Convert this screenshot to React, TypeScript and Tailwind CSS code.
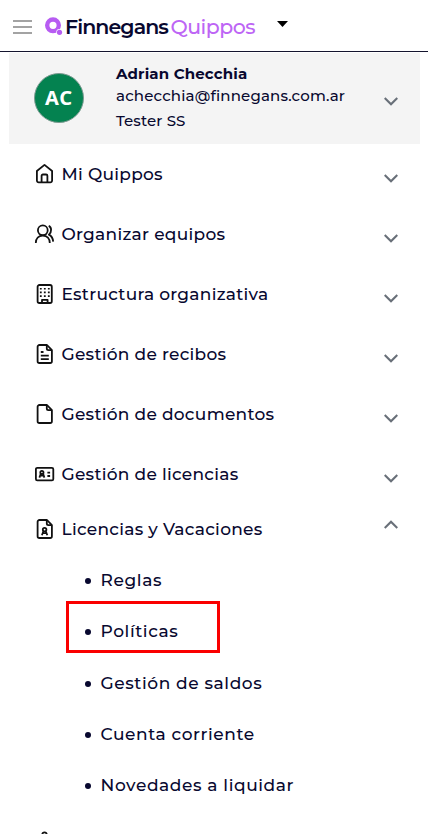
import type { ReactNode } from "react";
import { clsx } from "clsx";

const icons: Record<string, ReactNode> = {
    home: (
        <>
            <path d="M2.9 8 10.5 1.9 18.1 8v9.6a1.8 1.8 0 0 1-1.8 1.8H4.7a1.8 1.8 0 0 1-1.8-1.8Z" />
            <path d="M7.6 19v-6.2a1.3 1.3 0 0 1 1.3-1.3h3.2a1.3 1.3 0 0 1 1.3 1.3V19" />
        </>
    ),
    users: (
        <>
            <circle cx="8.8" cy="7.3" r="4.9" />
            <path d="M1.8 20c0-4.6 2.8-7.4 7-7.4s7 2.8 7 7.4M14.7 2.8c3 1.2 3.3 6.3.2 8.8 2.5 1.3 4 3.4 4.3 7" />
        </>
    ),
    building: (
        <>
            <rect x="3.6" y="2" width="14.2" height="18" rx="1.8" />
            <path d="M8 20v-3.2h5.6V20" />
            <path
                strokeDasharray="1.8 2.2"
                strokeWidth="1.6"
                d="M5.9 5.7h9.8M5.9 9.4h9.8M5.9 13.1h9.8"
            />
        </>
    ),
    receipt: (
        <>
            <path d="M5.4 2H13l4.9 5.2v11a1.8 1.8 0 0 1-1.8 1.8H5.4a1.8 1.8 0 0 1-1.8-1.8V3.8A1.8 1.8 0 0 1 5.4 2Z" />
            <path d="M12.8 2.2v3.4a1.6 1.6 0 0 0 1.6 1.6h3.2M6.8 9h2.7M6.8 12.6h8M6.8 16.2h8" />
        </>
    ),
    file: (
        <>
            <path d="M5.4 2H13l4.9 5.2v11a1.8 1.8 0 0 1-1.8 1.8H5.4a1.8 1.8 0 0 1-1.8-1.8V3.8A1.8 1.8 0 0 1 5.4 2Z" />
            <path d="M12.8 2.2v3.4a1.6 1.6 0 0 0 1.6 1.6h3.2" />
        </>
    ),
    card: (
        <>
            <rect x="1.9" y="4.8" width="17.4" height="12.6" rx="1.4" />
            <path d="M5.4 14.6 6.7 11M10.4 14.6 9.2 11M6.3 12.7h3.3M13.4 9.6h2.7M13.4 13h2.7" />
            <circle cx="7.9" cy="9.4" r="1.6" />
        </>
    ),
    profile: (
        <>
            <path d="M5.4 2H13l4.9 5.2v11a1.8 1.8 0 0 1-1.8 1.8H5.4a1.8 1.8 0 0 1-1.8-1.8V3.8A1.8 1.8 0 0 1 5.4 2Z" />
            <path d="M12.8 2.2v3.4a1.6 1.6 0 0 0 1.6 1.6h3.2M7.9 17.3l1.5-4M13.3 17.3l-1.5-4M8.7 15.2h3.8" />
            <circle cx="10.6" cy="11.6" r="1.8" />
        </>
    ),
};

const menu = [
    { icon: "home", label: "Mi Quippos" },
    { icon: "users", label: "Organizar equipos" },
    { icon: "building", label: "Estructura organizativa" },
    { icon: "receipt", label: "Gestión de recibos" },
    { icon: "file", label: "Gestión de documentos" },
    { icon: "card", label: "Gestión de licencias" },
];

const submenu = [
    { label: "Reglas" },
    { label: "Políticas", marked: true },
    { label: "Gestión de saldos" },
    { label: "Cuenta corriente" },
    { label: "Novedades a liquidar" },
];

export default function App() {
    return (
        <div className="flex h-[834px] w-[428px] flex-col overflow-hidden bg-white font-[Montserrat,Inter,sans-serif] font-medium text-[#08082f]">
            <Header />
            <UserCard />
            <nav className="flex flex-col">
                {menu.map((item) => (
                    <MenuRow key={item.label} {...item} className="h-[60px]" />
                ))}
                <MenuRow icon="profile" label="Licencias y Vacaciones" className="h-[50px]" open />
                <ul className="flex flex-col pt-[0.4px]">
                    {submenu.map((item) => (
                        <li
                            key={item.label}
                            className="relative flex h-[51.3px] items-center pl-[85px]"
                        >
                            {item.marked && (
                                <span className="absolute top-[-5px] left-[66px] h-[52px] w-[154px] border-3 border-[#fa0000]" />
                            )}
                            <span className="mt-[2px] mr-[9.5px] size-[6px] rounded-full bg-[#08082f]" />
                            <span className="text-[17px] leading-6 tracking-[0.6px] whitespace-nowrap">
                                {item.label}
                            </span>
                        </li>
                    ))}
                </ul>
                <div className="mt-[20px] h-6 pl-[34px]">
                    <svg className="size-[22px]" viewBox="0 0 22 22" fill="none" stroke="#111" strokeWidth="1.8">
                        <circle cx="10.5" cy="3.5" r="2.2" />
                        <path d="M10.5 6v5M4 17v-6h13v6" />
                    </svg>
                </div>
            </nav>
        </div>
    );
}

function Header() {
    return (
        <header className="flex h-[52px] shrink-0 border-b border-[#14142e] pl-[13px]">
            <div className="flex w-[19px] flex-col gap-[4px] pt-[20px]">
                <span className="h-[2px] bg-[#a3a3a3]" />
                <span className="h-[2px] bg-[#a3a3a3]" />
                <span className="h-[2px] bg-[#a3a3a3]" />
            </div>
            <svg className="mt-[16px] ml-[13px] h-[20px] w-[18px]" viewBox="0 0 18 20">
                <circle cx="8" cy="9.3" r="5.8" fill="none" stroke="#b75cf2" strokeWidth="4.4" />
                <circle cx="14.5" cy="16.3" r="3.2" fill="#fff" />
                <circle cx="14.5" cy="16.3" r="2.6" fill="#b75cf2" />
            </svg>
            <div className="flex pt-[13px] pl-[2px] text-[20.5px] leading-7">
                <span className="w-[105.5px] font-semibold tracking-[-0.9px]">Finnegans</span>
                <span className="w-[106.5px] tracking-[-0.5px] text-[#bd65f5]">Quippos</span>
            </div>
            <svg className="mt-[21px] h-[6px] w-[11px]" viewBox="0 0 11 6">
                <path d="M0 0h11L5.5 6Z" fill="#000" />
            </svg>
        </header>
    );
}

function UserCard() {
    return (
        <section className="mx-[9px] mt-[1px] mr-[8px] flex h-[91px] shrink-0 bg-[#f4f4f4] pl-[25px]">
            <div className="mt-[20px] flex size-[50px] items-center justify-center rounded-full border border-[#7c9a91] bg-[#048250] font-['Noto_Sans',sans-serif] text-[20px] font-bold tracking-[0.8px] text-white">
                AC
            </div>
            <div className="ml-[32px] flex w-[268px] flex-col pt-[9px] text-[15px] whitespace-nowrap">
                <span className="h-[22px] leading-[24px] font-bold tracking-[0.15px]">Adrian Checchia</span>
                <span className="h-[25px] leading-[24px] tracking-[0.18px]">achecchia@finnegans.com.ar</span>
                <span className="leading-[24px] tracking-[0.1px]">Tester SS</span>
            </div>
            <Chevron className="mt-[44px]" />
        </section>
    );
}

function MenuRow({
    icon,
    label,
    className,
    open = false,
}: {
    icon: string;
    label: string;
    className: string;
    open?: boolean;
}) {
    return (
        <div className={clsx("flex shrink-0 items-center pl-[34px]", className)}>
            <svg
                className="size-[22px]"
                viewBox="0 0 22 22"
                fill="none"
                stroke="#111"
                strokeWidth="1.8"
                strokeLinejoin="round"
            >
                {icons[icon]}
            </svg>
            <span className="w-[328px] pl-[5.5px] text-[17px] leading-6 tracking-[0.28px] whitespace-nowrap">
                {label}
            </span>
            <Chevron className={open ? "mb-[9px] rotate-180" : "mt-[8px]"} />
        </div>
    );
}

function Chevron({ className }: { className: string }) {
    return (
        <svg
            className={clsx("h-[9px] w-[14px] shrink-0", className)}
            viewBox="0 0 14 9"
            fill="none"
            stroke="#697079"
            strokeWidth="2.2"
        >
            <path d="m.7 1 6.3 6.3L13.3 1" />
        </svg>
    );
}
